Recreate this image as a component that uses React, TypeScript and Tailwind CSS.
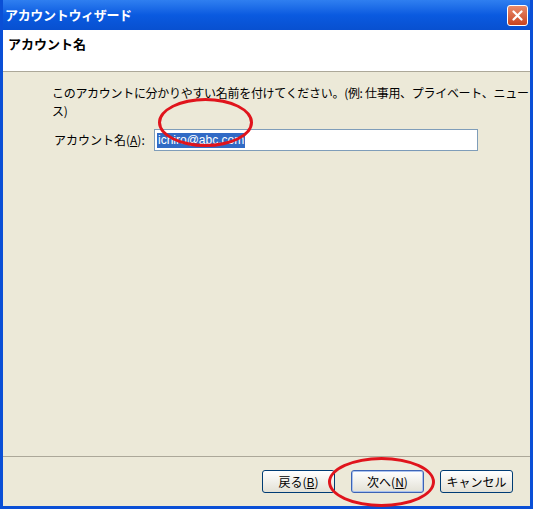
export default function App() {
  const font = { fontFamily: '"Noto Sans CJK JP", "Liberation Sans", sans-serif' };
  return (
    <div className="relative w-[533px] h-[509px] bg-[#0a4fd6] flex flex-col px-[3px] pb-[3px] text-[12px] text-black" style={font}>
      <div className="h-[30px] shrink-0 flex items-center justify-between pl-[2px] pr-[2px] bg-gradient-to-b from-[#2f7ff0] via-[#0a5ae0] to-[#0850d0]">
        <span className="text-white font-bold text-[13px] tracking-tight">アカウントウィザード</span>
        <div className="w-[21px] h-[21px] rounded-[3px] border border-white bg-gradient-to-b from-[#e98a6a] to-[#c8431c] flex items-center justify-center">
          <svg width="11" height="11" viewBox="0 0 11 11"><path d="M1.5 1.5L9.5 9.5M9.5 1.5L1.5 9.5" stroke="white" strokeWidth="2.2" strokeLinecap="round" /></svg>
        </div>
      </div>
      <div className="flex-1 flex flex-col bg-[#ece9d8]">
        <div className="h-[42px] bg-white border-b border-[#aca899] px-[5px] pt-[4px] font-bold text-[13px]">アカウント名</div>
        <div className="flex-1 flex flex-col pl-[49px] pt-[12px]">
          <div className="tracking-tight">このアカウントに分かりやすい名前を付けてください。(例: 仕事用、プライベート、ニュース)</div>
          <div className="flex items-center mt-[9px]">
            <span className="w-[102px] pl-[2px]">アカウント名(<u>A</u>):</span>
            <div className="w-[324px] h-[22px] bg-white border border-[#7f9db9] flex items-center px-[2px]">
              <span className="bg-[#316ac5] text-white px-[1px] leading-[15px]" style={{ fontFamily: '"Liberation Sans", sans-serif' }}>ichiro@abc.com</span>
            </div>
          </div>
        </div>
        <div className="h-[50px] border-t border-[#aca899] flex items-start justify-end gap-[16px] pr-[17px] pt-[13px]">
          {["戻る(B)", "次へ(N)", "キャンセル"].map((t, i) => (
            <div key={t} className={`w-[73px] h-[23px] rounded-[3px] border flex items-center justify-center bg-gradient-to-b from-white to-[#e3e1d6] ${i === 1 ? "border-[#3c63b4] shadow-[inset_0_0_0_1px_#a9c2ef]" : "border-[#003c74]"}`}>
              {i === 0 ? <span>戻る(<u>B</u>)</span> : i === 1 ? <span>次へ(<u>N</u>)</span> : <span>キャンセル</span>}
            </div>
          ))}
        </div>
      </div>
      <div className="absolute left-[158px] top-[98px] w-[95px] h-[49px] rounded-[50%] border-[3px] border-[#e0141c]" />
      <div className="absolute left-[328px] top-[457px] w-[107px] h-[50px] rounded-[50%] border-[3px] border-[#e0141c]" />
    </div>
  );
}
